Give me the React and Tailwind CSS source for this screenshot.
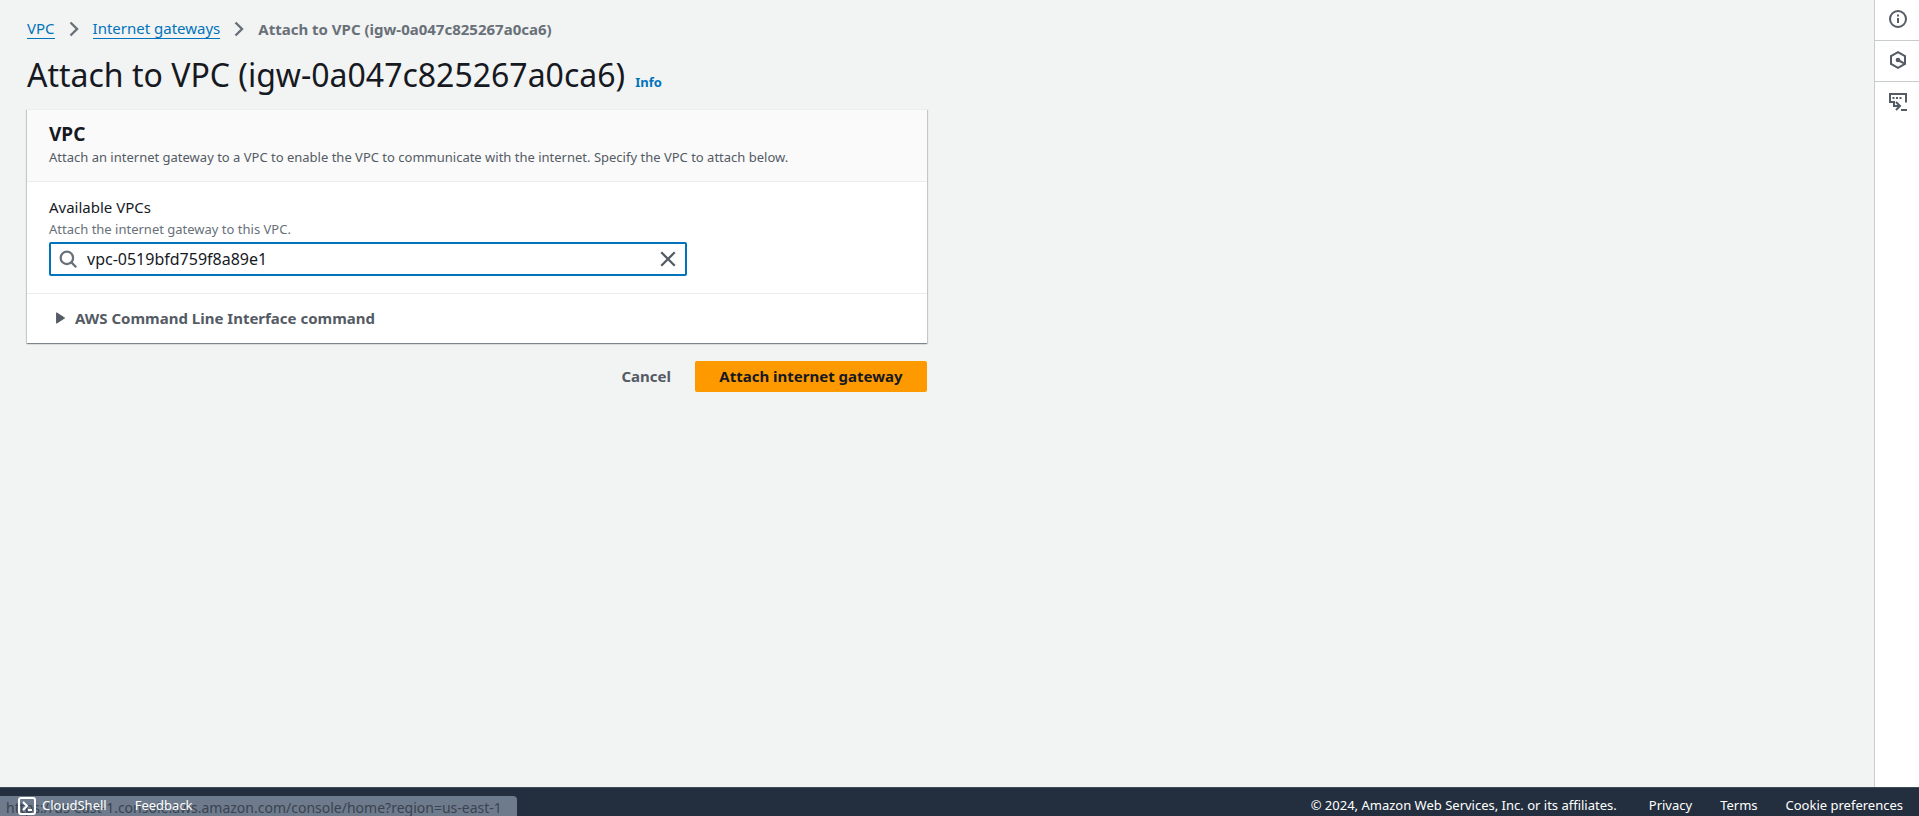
import { useState } from "react";

const stroke = { fill: "none", stroke: "currentColor", strokeWidth: 2 };

function Chevron() {
  return (
    <svg viewBox="0 0 18 18" className="size-[18px] shrink-0 text-[#687078]" aria-hidden="true">
      <path d="M5.500 2.500l6.500 6.500-6.500 6.500" {...stroke} strokeWidth="2.4" />
    </svg>
  );
}

function Crumb({ children }) {
  return (
    <a href="#" className="border-b border-[#0073bb] leading-5 text-[#0073bb]">
      {children}
    </a>
  );
}

function ToolButton({ label, last, children }) {
  return (
    <button
      type="button"
      aria-label={label}
      className={
        last
          ? "flex h-[41px] items-center justify-center pb-0.5 pl-0.5 text-[#545b64]"
          : "flex h-[41px] items-center justify-center border-b border-[#c8cccc] pb-0.5 pl-0.5 text-[#545b64]"
      }
    >
      <svg viewBox="0 0 18 18" className="size-[18px]" aria-hidden="true">
        {children}
      </svg>
    </button>
  );
}

export default function App() {
  const [vpc, setVpc] = useState("vpc-0519bfd759f8a89e1");

  return (
    <div className="flex min-h-screen flex-col bg-[#f2f3f3] font-['Noto_Sans',sans-serif] text-[15px] text-[#16191f]">
      <div className="flex flex-1">
        <main className="min-w-0 flex-1 px-[27px] pt-[18px]">
          <nav aria-label="Breadcrumb" className="flex items-center gap-2.5 leading-5">
            <Crumb>VPC</Crumb>
            <Chevron />
            <Crumb>Internet gateways</Crumb>
            <Chevron />
            <span className="font-bold text-[#687078]">Attach to VPC (igw-0a047c825267a0ca6)</span>
          </nav>

          <div className="mt-4 flex items-baseline gap-2.5">
            <h1 className="text-[32px] leading-10">Attach to VPC (igw-0a047c825267a0ca6)</h1>
            <a href="#" className="text-[13px] font-bold text-[#0073bb]">Info</a>
          </div>

          <div className="max-w-[900px]">
            <section className="mt-[14px] border-t border-[#eaeded] bg-white shadow-[0_1px_1px_0_rgba(0,28,36,0.3),1px_1px_1px_0_rgba(0,28,36,0.15),-1px_1px_1px_0_rgba(0,28,36,0.15)]">
              <header className="border-b border-[#eaeded] bg-[#fafafa] px-[22px] pt-3 pb-[14px]">
                <h2 className="text-[19px] leading-[25px] font-bold">VPC</h2>
                <p className="text-[13px] leading-5 text-[#545b64]">
                  Attach an internet gateway to a VPC to enable the VPC to communicate with the internet. Specify the VPC to attach below.
                </p>
              </header>

              <div className="px-[22px] pt-[15px] pb-[17px]">
                <label htmlFor="vpc" className="mb-0.5 block leading-5">Available VPCs</label>
                <p id="vpc-hint" className="text-[13px] leading-5 text-[#687078]">Attach the internet gateway to this VPC.</p>
                <div className="mt-[3px] flex h-[34px] max-w-[638px] items-center rounded-xs border-2 border-[#0073bb] bg-white px-2">
                  <svg viewBox="0 0 16 16" className="size-[18px] shrink-0 text-[#687078]" aria-hidden="true">
                    <circle cx="7" cy="7" r="5.500" {...stroke} />
                    <path d="M15.300 15.300l-4.500-4.500" {...stroke} />
                  </svg>
                  <input
                    id="vpc"
                    type="text"
                    value={vpc}
                    onChange={(e) => setVpc(e.target.value)}
                    aria-describedby="vpc-hint"
                    className="ml-2.5 min-w-0 flex-1 bg-transparent text-base outline-none"
                  />
                  <button type="button" aria-label="Clear" onClick={() => setVpc("")} className="text-[#545b64]">
                    <svg viewBox="0 0 16 16" className="size-[18px]" aria-hidden="true">
                      <path d="M2 2l12 12M14 2L2 14" {...stroke} />
                    </svg>
                  </button>
                </div>
              </div>

              <div className="border-t border-[#eaeded] px-[29px] pt-[14px] pb-[15px]">
                <button type="button" className="flex items-center gap-2.5 leading-5 font-bold text-[#545b64]">
                  <svg viewBox="0 0 9 12" className="h-3 w-[9px]" aria-hidden="true">
                    <path d="M.6.8v10.4L8.6 6z" fill="currentColor" stroke="currentColor" strokeLinejoin="round" />
                  </svg>
                  AWS Command Line Interface command
                </button>
              </div>
            </section>

            <div className="mt-[18px] flex justify-end gap-1 font-bold">
              <button type="button" className="h-[31px] px-5 text-[#545b64]">Cancel</button>
              <button type="button" className="h-[31px] w-[232px] rounded-xs bg-[#ff9900]">Attach internet gateway</button>
            </div>
          </div>
        </main>

        <aside className="flex w-[45px] shrink-0 flex-col border-l border-[#c8cccc] bg-white">
          <ToolButton label="Info">
            <circle cx="9" cy="9" r="8" {...stroke} />
            <path d="M9 8v5M9 4.500v2" {...stroke} />
          </ToolButton>
          <ToolButton label="Diagnostics">
            <path d="M9 1.200l7 3.900v7.800l-7 3.900-7-3.900V5.100z" {...stroke} />
            <circle cx="9" cy="9" r="2.300" fill="currentColor" />
            <path d="M9 9l6 3.300" {...stroke} />
          </ToolButton>
          <ToolButton label="Command console" last>
            <path d="M4 9H1V1h16v8.500M5 8v5h5M7 9l4 4-4 4M12 17h6" {...stroke} />
            <path d="M3.500 5h2M7 5h2M10.500 5h2" {...stroke} />
          </ToolButton>
        </aside>
      </div>

      <footer className="relative flex h-[29px] items-center justify-between border-t border-[#414b58] bg-[#232f3e] pt-[7px] pr-4 pl-[18px] text-[13px] text-white">
        <div className="absolute bottom-0 left-0 h-5 w-[517px] overflow-hidden rounded-tr bg-[#6e7b8d] pl-1.5 text-[14px] leading-6 whitespace-nowrap text-[#39434f]">
          https://us-east-1.console.aws.amazon.com/console/home?region=us-east-1
        </div>
        <div className="relative flex items-center gap-7">
          <a href="#" className="flex items-center gap-1.5">
            <svg viewBox="0 0 18 18" className="size-[18px]" aria-hidden="true">
              <rect x="1" y="1" width="16" height="16" rx="2" {...stroke} />
              <path d="M5 5l4 4-4 4M10 13h4" {...stroke} />
            </svg>
            CloudShell
          </a>
          <a href="#">Feedback</a>
        </div>
        <div className="flex items-center">
          <span>© 2024, Amazon Web Services, Inc. or its affiliates.</span>
          <a href="#" className="ml-8">Privacy</a>
          <a href="#" className="ml-7">Terms</a>
          <a href="#" className="ml-7">Cookie preferences</a>
        </div>
      </footer>
    </div>
  );
}
